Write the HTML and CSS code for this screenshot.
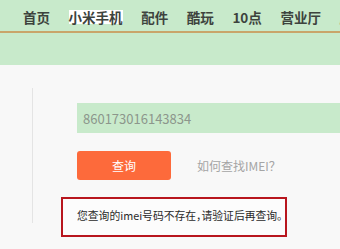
FILE: index.html
```html
<!DOCTYPE html>
<html lang="zh-CN">
<head>
<meta charset="utf-8">
<title>IMEI 查询</title>
<link rel="stylesheet" href="styles.css">
</head>
<body>
<header class="topbar">
  <nav class="nav">
    <a class="nav-item">首页</a>
    <a class="nav-item nav-item-active">小米手机</a>
    <a class="nav-item">配件</a>
    <a class="nav-item">酷玩</a>
    <a class="nav-item">10点</a>
    <a class="nav-item">营业厅</a>
    <a class="nav-item">服务</a>
  </nav>
  <div class="subbar"></div>
</header>
<main class="page">
  <section class="panel">
    <input class="imei-input" type="text" value="860173016143834">
    <div class="actions">
      <button class="btn-query">查询</button>
      <a class="help-link">如何查找IMEI？</a>
    </div>
    <div class="message">您查询的imei号码不存在，请验证后再查询。</div>
  </section>
</main>
</body>
</html>
```
FILE: styles.css
```css
* { box-sizing: border-box; }
html, body {
  margin: 0;
  padding: 0;
  width: 340px;
  height: 249px;
  overflow: hidden;
  background: #f8f8f8;
  font-family: "Noto Sans CJK SC", "Noto Sans", sans-serif;
}
.topbar {
  background: #c8eacb;
}
.nav {
  display: flex;
  align-items: center;
  gap: 18.6px;
  height: 33px;
  padding: 2px 0 0 23px;
  border-bottom: 2px solid #c9a56a;
  white-space: nowrap;
  overflow: hidden;
}
.nav-item {
  font-size: 13.5px;
  font-weight: bold;
  color: #3d433d;
  line-height: 14px;
  flex: none;
}
.nav-item-active {
  background: #ffffff;
  padding: 0;
}
.subbar {
  height: 32px;
}
.page {
  padding: 23px 0 0 32px;
}
.panel {
  display: flex;
  flex-direction: column;
  align-items: flex-start;
  border-left: 1px solid #e4e4e4;
  padding: 15px 0 0 44px;
}
.imei-input {
  display: block;
  width: 300px;
  height: 30px;
  border: none;
  outline: none;
  background: #c8eacb;
  color: #8c968c;
  font-family: "Noto Sans CJK SC", "Noto Sans", sans-serif;
  font-size: 13px;
  padding: 0 6px;
  margin: 0;
}
.actions {
  display: flex;
  align-items: center;
  margin-top: 18px;
}
.btn-query {
  width: 94px;
  height: 29px;
  border: none;
  border-radius: 3px;
  background: #fd6a3b;
  color: #ffffff;
  font-family: "Noto Sans CJK SC", sans-serif;
  font-size: 12px;
  padding: 0;
}
.help-link {
  margin-left: 26px;
  font-size: 12px;
  color: #a5a5a5;
}
.message {
  margin: 17px 0 -14px -16px;
  width: 226px;
  height: 40px;
  border: 2px solid #b8161e;
  background: #fcfcfc;
  padding: 8px 0 0 14px;
  font-size: 10.8px;
  line-height: 16px;
  color: #2a2a2a;
  white-space: nowrap;
  font-feature-settings: "halt";
}
```
